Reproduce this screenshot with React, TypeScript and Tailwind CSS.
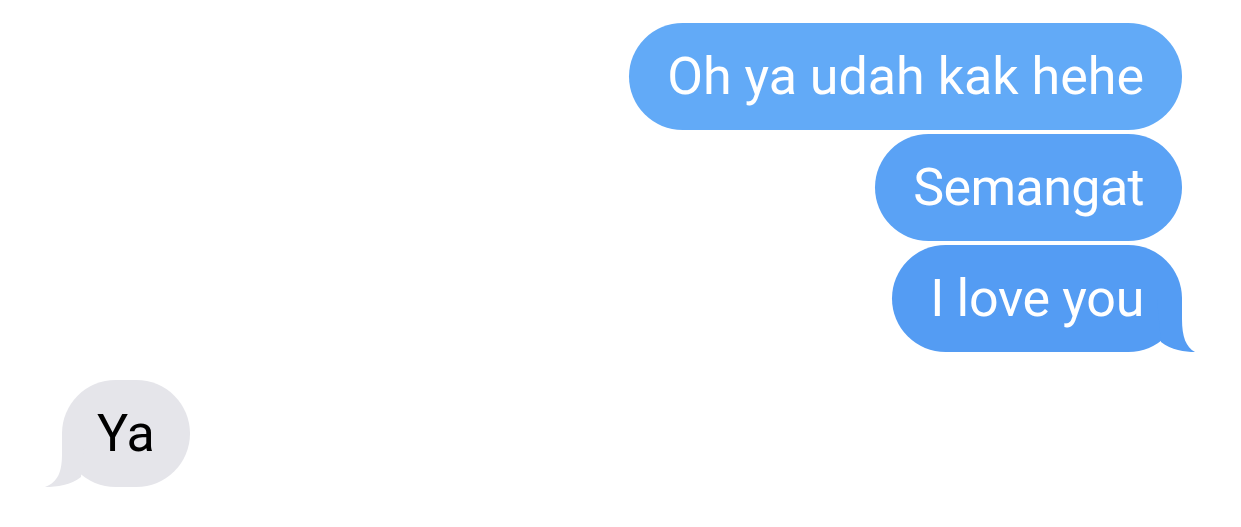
export default function App() {
  return (
    <div
      className="w-[1241px] h-[527px] bg-white overflow-hidden pt-[23px]"
      style={{ fontFamily: 'Roboto, "Noto Sans", sans-serif' }}
    >
      {/* Outgoing */}
      <div className="flex flex-col items-end gap-[4px] pr-[59px]">
        <div className="h-[107px] flex items-center px-[38px] rounded-full bg-[#62aaf7] text-white text-[52px]">
          Oh ya udah kak hehe
        </div>
        <div className="h-[107px] flex items-center px-[38px] rounded-full bg-[#5aa2f5] text-white text-[52px] tracking-[-0.6px]">
          Semangat
        </div>
        <div className="relative h-[107px] flex items-center px-[38px] rounded-full bg-[#549cf3] text-white text-[52px] tracking-[-0.3px]">
          I love you
          <svg
            className="absolute right-[-15px] bottom-0"
            width="40"
            height="53"
            viewBox="0 0 40 53"
          >
            <path d="M0 0 H25 L25 20 C25 38 29 48 38 53 C28 53 14 51 4 43 Z" fill="#549cf3" />
          </svg>
        </div>
      </div>

      {/* Incoming */}
      <div className="flex pl-[62px] mt-[28px]">
        <div className="relative h-[107px] flex items-center px-[35px] rounded-full bg-[#e5e5ea] text-black text-[52px]">
          Ya
          <svg
            className="absolute left-[-19px] bottom-0"
            width="42"
            height="53"
            viewBox="0 0 42 53"
          >
            <path d="M42 0 H19 L19 20 C19 38 15 48 2 53 C14 53 28 51 38 43 Z" fill="#e5e5ea" />
          </svg>
        </div>
      </div>
    </div>
  );
}
